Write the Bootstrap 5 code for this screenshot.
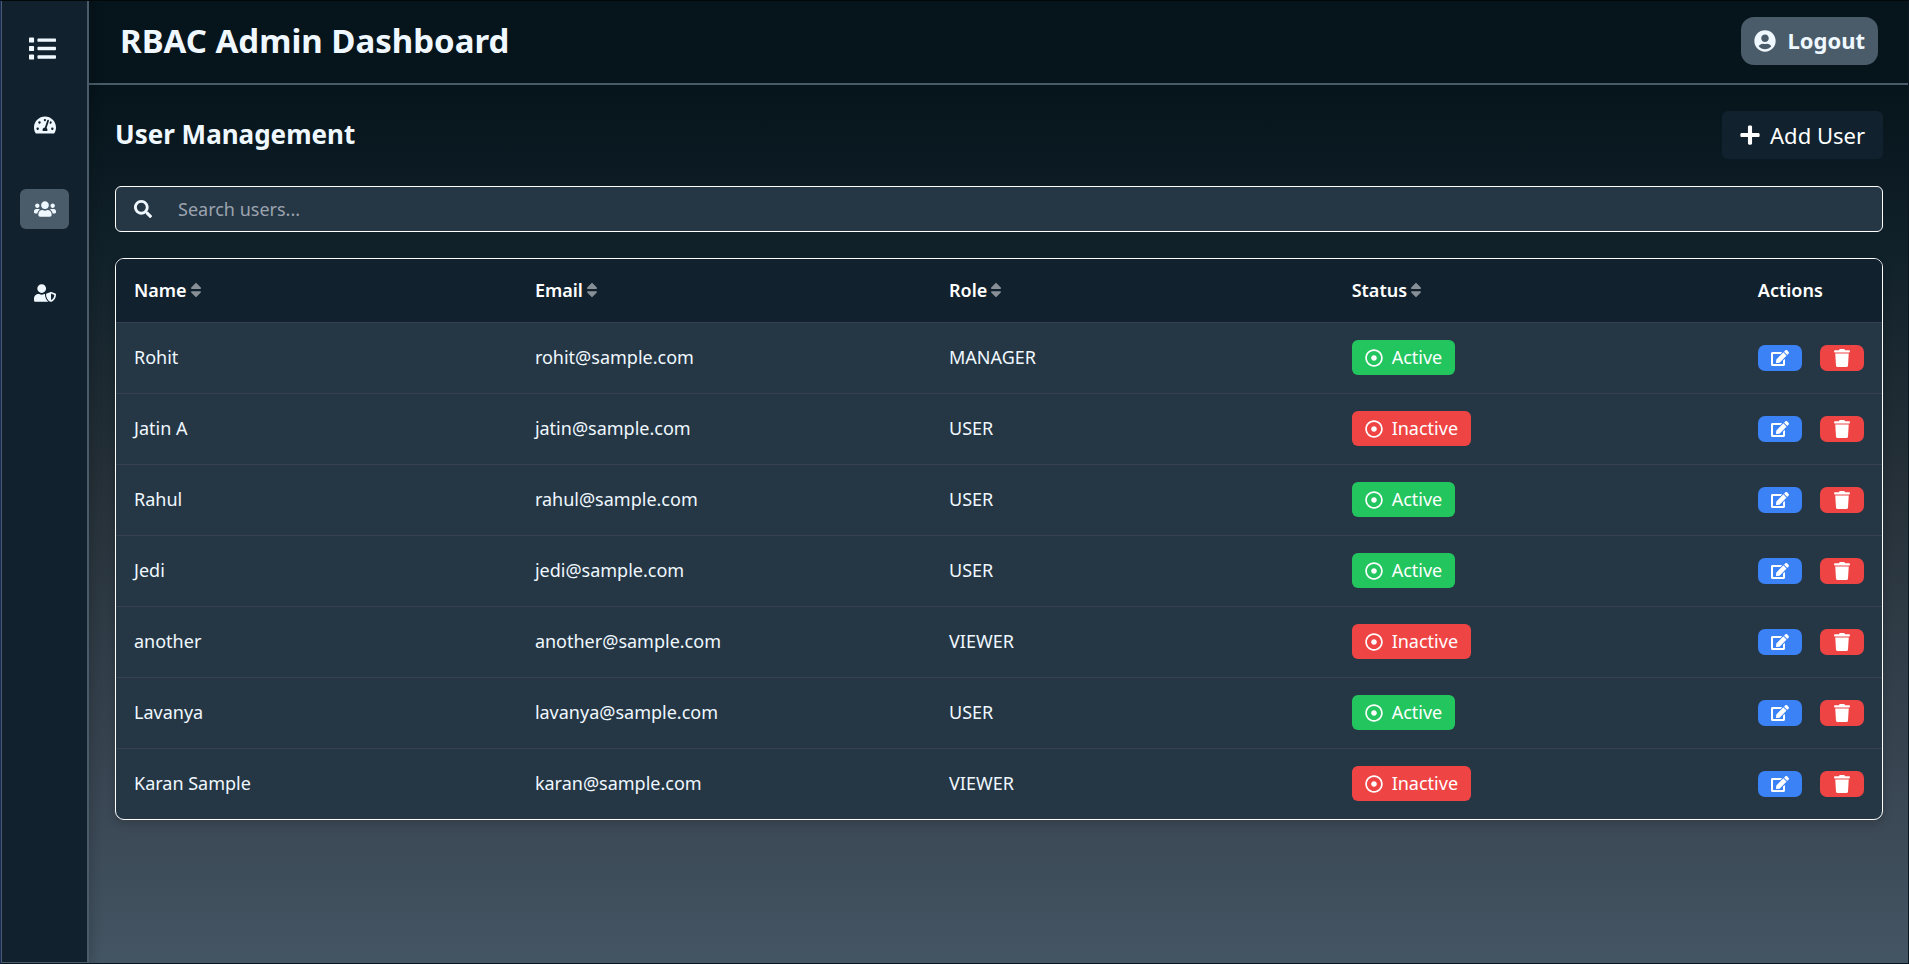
<!DOCTYPE html>
<html lang="en">
<head>
<meta charset="utf-8">
<meta name="viewport" content="width=device-width, initial-scale=1">
<title>RBAC Admin Dashboard</title>
<link href="https://cdn.jsdelivr.net/npm/bootstrap@5.3.0/dist/css/bootstrap.min.css" rel="stylesheet">
<style>
  body {
    font-family: "Noto Sans", sans-serif;
    font-size: 18px;
    color: #f0f8ff;
    background: #06141b;
    border: 1px solid #0a1620;
    border-left-color: #1b2b57;
    border-top-color: #02070a;
  }
  svg { fill: currentColor; display: block; flex: none; }
  .rail {
    width: 88px;
    background: #11212d;
    border: 1px solid #4a5c6a;
    border-width: 0 2px 1px 1px;
    padding-top: 27px;
    box-shadow: 4px 0 10px rgba(0, 0, 0, .15);
    z-index: 1;
  }
  .rail-btn { width: 49px; height: 40px; border-radius: 6px; color: inherit; }
  .rail-btn.active { background: #4a5c6a; }
  .rail-list { gap: 44px; margin-top: 37px; }
  .workspace { background: linear-gradient(to bottom, #06141b 84px, #11212a 250px, #253038 480px, #3a4754 800px, #445563); }
  .topbar { height: 84px; background: #06141b; border-bottom: 2px solid #4a5c6a; padding: 0 30px 2px 31px; }
  .topbar h1 { font-size: 33px; font-weight: 700; }
  .logout { height: 48px; border-radius: 13px; padding: 0 13px 1px; gap: 11px; background: #4a5c6a; color: #f0f8ff; font-size: 22px; font-weight: 700; }
  .logout:hover, .add-user:hover { background: #253745; color: #fff; }
  .content { padding: 26px 25px 26px 26px; }
  .content h2 { font-size: 26px; font-weight: 700; }
  .add-user { height: 48px; border-radius: 6px; padding: 0 18px; gap: 10px; background: #11212d; color: #fff; font-size: 22px; }
  .search-box { height: 46px; margin-top: 27px; padding: 0 18px; gap: 26px; border: 1px solid #fff; border-radius: 6px; background: #253745; }
  .search-box input { font-size: 18px; color: #f0f8ff; outline: 0; }
  .search-box input::placeholder { color: #9ca3af; opacity: 1; }
  .user-card { margin-top: 26px; border: 1px solid #fff; border-radius: 9px; background: #253745; box-shadow: 0 4px 10px rgba(0, 0, 0, .15); }
  .user-table { table-layout: fixed; color: inherit; --bs-table-bg: transparent; --bs-table-color: #f0f8ff; }
  .user-table th { height: 63px; padding: 0 18px; font-weight: 600; color: #fff; background: #11212d; border-color: #374151; vertical-align: middle; }
  .user-table td { height: 71px; padding: 0 18px; border-color: #374151; color: #f0f8ff; }
  .user-table tr:last-child td { border-bottom: 0; }
  .sort-btn { color: inherit; font-size: 18px; font-weight: inherit; gap: 3px; }
  .sort-btn svg { color: #888f96; }
  .state-pill { height: 35px; border-radius: 6px; padding: 0 13px; gap: 9px; color: #fff; }
  .state-on { background: #22c55e; }
  .state-off { background: #ef4444; }
  .act { width: 44px; height: 26px; border-radius: 7px; color: #fff; }
  .act-edit { background: #3b82f6; }
  .act-delete { background: #ef4444; }
  .act-row { gap: 18px; }
</style>
</head>
<body class="d-flex min-vh-100">
<svg width="0" height="0" class="position-absolute" aria-hidden="true">
  <symbol id="i-list" viewBox="0 0 512 512"><path d="M80 368H16a16 16 0 0 0-16 16v64a16 16 0 0 0 16 16h64a16 16 0 0 0 16-16v-64a16 16 0 0 0-16-16zm0-320H16A16 16 0 0 0 0 64v64a16 16 0 0 0 16 16h64a16 16 0 0 0 16-16V64a16 16 0 0 0-16-16zm0 160H16a16 16 0 0 0-16 16v64a16 16 0 0 0 16 16h64a16 16 0 0 0 16-16v-64a16 16 0 0 0-16-16zm416 176H176a16 16 0 0 0-16 16v32a16 16 0 0 0 16 16h320a16 16 0 0 0 16-16v-32a16 16 0 0 0-16-16zm0-320H176a16 16 0 0 0-16 16v32a16 16 0 0 0 16 16h320a16 16 0 0 0 16-16V80a16 16 0 0 0-16-16zm0 160H176a16 16 0 0 0-16 16v32a16 16 0 0 0 16 16h320a16 16 0 0 0 16-16v-32a16 16 0 0 0-16-16z"/></symbol>
  <symbol id="i-gauge" viewBox="0 0 576 512"><path d="M288 32C128.940 32 0 160.940 0 320c0 52.800 14.250 102.260 39.060 144.800 5.610 9.620 16.300 15.200 27.440 15.200h443c11.140 0 21.830-5.580 27.440-15.200C561.750 422.260 576 372.800 576 320c0-159.060-128.940-288-288-288zm0 64c14.710 0 26.580 10.130 30.320 23.650-1.110 2.260-2.640 4.230-3.450 6.670l-9.220 27.670c-5.130 3.490-10.970 6.010-17.640 6.010-17.670 0-32-14.330-32-32S270.330 96 288 96zM96 384c-17.670 0-32-14.330-32-32s14.330-32 32-32 32 14.330 32 32-14.330 32-32 32zm48-160c-17.670 0-32-14.330-32-32s14.330-32 32-32 32 14.330 32 32-14.330 32-32 32zm246.770-72.410l-61.330 184C343.130 347.330 352 364.540 352 384c0 11.720-3.380 22.550-8.880 32H232.880c-5.500-9.450-8.880-20.280-8.880-32 0-33.940 26.500-61.430 59.900-63.590l61.340-184.010c4.170-12.560 17.730-19.450 30.360-15.170 12.570 4.190 19.350 17.790 15.170 30.360zm14.660 57.200l15.520-46.550c3.470-1.290 7.130-2.230 11.050-2.230 17.670 0 32 14.330 32 32s-14.330 32-32 32c-11.380-.01-20.890-6.280-26.570-15.220zM480 384c-17.670 0-32-14.330-32-32s14.330-32 32-32 32 14.330 32 32-14.330 32-32 32z"/></symbol>
  <symbol id="i-users" viewBox="0 0 640 512"><path d="M96 224c35.300 0 64-28.700 64-64s-28.700-64-64-64-64 28.700-64 64 28.700 64 64 64zm448 0c35.300 0 64-28.700 64-64s-28.700-64-64-64-64 28.700-64 64 28.700 64 64 64zm32 32h-64c-17.600 0-33.500 7.100-45.100 18.600 40.300 22.100 68.900 62 75.100 109.400h66c17.700 0 32-14.300 32-32v-32c0-35.300-28.700-64-64-64zm-256 0c61.900 0 112-50.100 112-112S381.900 32 320 32 208 82.100 208 144s50.100 112 112 112zm76.800 32h-8.300c-20.800 10-43.900 16-68.500 16s-47.600-6-68.500-16h-8.300C179.600 288 128 339.600 128 403.200V432c0 26.500 21.500 48 48 48h288c26.500 0 48-21.500 48-48v-28.800c0-63.600-51.600-115.200-115.200-115.200zm-223.700-13.400C161.500 263.100 145.600 256 128 256H64c-35.300 0-64 28.700-64 64v32c0 17.700 14.300 32 32 32h65.900c6.300-47.400 34.900-87.300 75.200-109.400z"/></symbol>
  <symbol id="i-shield" viewBox="0 0 640 512"><path fill-rule="evenodd" d="M622.300 271.100l-115.200-45c-4.100-1.600-12.600-3.700-22.200 0l-115.200 45c-10.700 4.200-17.700 14-17.700 24.900 0 111.600 68.700 188.800 132.900 213.900 9.600 3.700 18 1.600 22.200 0C558.400 489.900 640 420.500 640 296c0-10.900-7-20.700-17.700-24.900zM496 462.400V273.300l95.500 37.300c-5.600 87.100-60.900 135.400-95.500 151.800zM224 256c70.700 0 128-57.300 128-128S294.700 0 224 0 96 57.300 96 128s57.300 128 128 128zm96 40c0-2.500.8-4.800 1.100-7.200-2.500-.1-4.900-.8-7.500-.8h-16.700c-22.200 10.200-46.900 16-72.900 16s-50.600-5.800-72.900-16h-16.700C60.200 288 0 348.200 0 422.400V464c0 26.500 21.500 48 48 48h352c6.800 0 13.300-1.500 19.200-4-54-42.900-99.200-116.700-99.200-212z"/></symbol>
  <symbol id="i-user" viewBox="0 0 496 512"><path d="M248 8C111 8 0 119 0 256s111 248 248 248 248-111 248-248S385 8 248 8zm0 96c48.600 0 88 39.400 88 88s-39.400 88-88 88-88-39.400-88-88 39.400-88 88-88zm0 344c-58.700 0-111.300-26.600-146.500-68.200 18.800-35.400 55.600-59.800 98.500-59.800 2.400 0 4.800.4 7.100 1.100 13 4.200 26.600 6.900 40.900 6.900 14.300 0 28-2.700 40.900-6.900 2.300-.7 4.700-1.100 7.100-1.100 42.900 0 79.700 24.400 98.500 59.800C359.300 421.400 306.700 448 248 448z"/></symbol>
  <symbol id="i-plus" viewBox="0 0 448 512"><path d="M416 208H272V64c0-17.670-14.330-32-32-32h-32c-17.670 0-32 14.330-32 32v144H32c-17.670 0-32 14.330-32 32v32c0 17.670 14.330 32 32 32h144v144c0 17.670 14.330 32 32 32h32c17.670 0 32-14.330 32-32V304h144c17.670 0 32-14.330 32-32v-32c0-17.670-14.330-32-32-32z"/></symbol>
  <symbol id="i-search" viewBox="0 0 512 512"><path d="M505 442.700L405.300 343c-4.500-4.500-10.600-7-17-7H372c27.600-35.300 44-79.700 44-128C416 93.100 322.900 0 208 0S0 93.100 0 208s93.100 208 208 208c48.300 0 92.700-16.400 128-44v16.300c0 6.400 2.500 12.500 7 17l99.700 99.700c9.400 9.400 24.600 9.400 33.900 0l28.300-28.300c9.400-9.400 9.400-24.600.1-34zM208 336c-70.700 0-128-57.200-128-128 0-70.700 57.200-128 128-128 70.700 0 128 57.200 128 128 0 70.700-57.200 128-128 128z"/></symbol>
  <symbol id="i-sort" viewBox="0 0 320 512"><path d="M41 288h238c21.400 0 32.100 25.900 17 41L177 448c-9.400 9.400-24.600 9.400-33.900 0L24 329c-15.100-15.100-4.400-41 17-41zm255-105L177 64c-9.400-9.400-24.600-9.400-33.900 0L24 183c-15.100 15.100-4.400 41 17 41h238c21.400 0 32.100-25.900 17-41z"/></symbol>
  <symbol id="i-dot" viewBox="0 0 512 512"><path d="M256 56c110.532 0 200 89.451 200 200 0 110.532-89.451 200-200 200-110.532 0-200-89.451-200-200 0-110.532 89.451-200 200-200m0-48C119.033 8 8 119.033 8 256s111.033 248 248 248 248-111.033 248-248S392.967 8 256 8zm0 168c-44.183 0-80 35.817-80 80s35.817 80 80 80 80-35.817 80-80-35.817-80-80-80z"/></symbol>
  <symbol id="i-edit" viewBox="0 0 576 512"><path d="M402.600 83.200l90.200 90.200c3.800 3.800 3.800 10 0 13.800L274.400 405.600l-92.800 10.300c-12.400 1.400-22.900-9.100-21.500-21.500l10.300-92.800L388.800 83.200c3.800-3.800 10-3.800 13.800 0zm162-22.900l-48.800-48.800c-15.200-15.200-39.900-15.200-55.200 0l-35.400 35.400c-3.800 3.800-3.800 10 0 13.800l90.200 90.200c3.800 3.800 10 3.800 13.800 0l35.400-35.400c15.200-15.300 15.200-40 0-55.200zM384 346.200V448H64V128h229.800c3.200 0 6.200-1.300 8.500-3.500l40-40c7.600-7.600 2.200-20.500-8.500-20.500H48C21.500 64 0 85.500 0 112v352c0 26.500 21.500 48 48 48h352c26.500 0 48-21.500 48-48V306.200c0-10.700-12.900-16-20.500-8.500l-40 40c-2.200 2.300-3.500 5.300-3.500 8.500z"/></symbol>
  <symbol id="i-trash" viewBox="0 0 448 512"><path d="M432 32H312l-9.400-18.700A24 24 0 0 0 281.100 0H166.800a23.720 23.720 0 0 0-21.400 13.300L136 32H16A16 16 0 0 0 0 48v32a16 16 0 0 0 16 16h416a16 16 0 0 0 16-16V48a16 16 0 0 0-16-16zM53.200 467a48 48 0 0 0 47.900 45h245.800a48 48 0 0 0 47.900-45L416 128H32z"/></symbol>
</svg>

<aside class="rail d-flex flex-column align-items-center flex-shrink-0">
  <button type="button" class="rail-btn btn p-0 border-0 me-1 d-flex align-items-center justify-content-center" aria-label="Toggle menu"><svg width="27" height="27"><use href="#i-list"/></svg></button>
  <nav class="rail-list d-flex flex-column" aria-label="Main">
    <a href="#dashboard" class="rail-btn d-flex align-items-center justify-content-center" aria-label="Dashboard"><svg width="22" height="20"><use href="#i-gauge"/></svg></a>
    <a href="#users" class="rail-btn active d-flex align-items-center justify-content-center" aria-label="Users" aria-current="page"><svg width="22" height="18"><use href="#i-users"/></svg></a>
    <a href="#roles" class="rail-btn d-flex align-items-center justify-content-center" aria-label="Roles"><svg width="22" height="18"><use href="#i-shield"/></svg></a>
  </nav>
</aside>

<div class="workspace flex-grow-1 d-flex flex-column">
  <header class="topbar d-flex align-items-center justify-content-between">
    <h1 class="m-0">RBAC Admin Dashboard</h1>
    <button type="button" class="logout btn border-0 d-flex align-items-center"><svg width="22" height="22"><use href="#i-user"/></svg>Logout</button>
  </header>
  <main class="content">
    <div class="d-flex align-items-center justify-content-between">
      <h2 class="m-0">User Management</h2>
      <button type="button" class="add-user btn border-0 d-flex align-items-center"><svg width="20" height="22"><use href="#i-plus"/></svg>Add User</button>
    </div>
    <label class="search-box d-flex align-items-center">
      <svg width="18" height="18"><use href="#i-search"/></svg>
      <input type="search" class="flex-grow-1 border-0 p-0 bg-transparent" placeholder="Search users..." aria-label="Search users">
    </label>
    <div class="user-card overflow-hidden">
      <table class="user-table table align-middle m-0">
        <colgroup><col style="width:22.7%"><col style="width:23.45%"><col style="width:22.8%"><col style="width:23%"><col style="width:8.05%"></colgroup>
        <thead>
          <tr>
            <th scope="col"><button type="button" class="sort-btn btn border-0 p-0 d-flex align-items-center">Name<svg width="12" height="18"><use href="#i-sort"/></svg></button></th>
            <th scope="col"><button type="button" class="sort-btn btn border-0 p-0 d-flex align-items-center">Email<svg width="12" height="18"><use href="#i-sort"/></svg></button></th>
            <th scope="col"><button type="button" class="sort-btn btn border-0 p-0 d-flex align-items-center">Role<svg width="12" height="18"><use href="#i-sort"/></svg></button></th>
            <th scope="col"><button type="button" class="sort-btn btn border-0 p-0 d-flex align-items-center">Status<svg width="12" height="18"><use href="#i-sort"/></svg></button></th>
            <th scope="col">Actions</th>
          </tr>
        </thead>
        <tbody id="rows"></tbody>
      </table>
    </div>
  </main>
</div>
<script src="https://cdn.jsdelivr.net/npm/bootstrap@5.3.0/dist/js/bootstrap.bundle.min.js"></script>
<script>
  const users = [
    ["Rohit", "rohit@sample.com", "MANAGER", true],
    ["Jatin A", "jatin@sample.com", "USER", false],
    ["Rahul", "rahul@sample.com", "USER", true],
    ["Jedi", "jedi@sample.com", "USER", true],
    ["another", "another@sample.com", "VIEWER", false],
    ["Lavanya", "lavanya@sample.com", "USER", true],
    ["Karan Sample", "karan@sample.com", "VIEWER", false]
  ];
  document.getElementById("rows").innerHTML = users.map(([name, email, role, active]) => `
    <tr>
      <td>${name}</td><td>${email}</td><td>${role}</td>
      <td><span class="state-pill d-inline-flex align-items-center align-middle ${active ? "state-on" : "state-off"}"><svg width="18" height="18"><use href="#i-dot"/></svg>${active ? "Active" : "Inactive"}</span></td>
      <td><div class="act-row d-flex">
        <button type="button" class="act act-edit btn border-0 p-0 d-flex align-items-center justify-content-center" aria-label="Edit ${name}"><svg width="18" height="16"><use href="#i-edit"/></svg></button>
        <button type="button" class="act act-delete btn border-0 p-0 d-flex align-items-center justify-content-center" aria-label="Delete ${name}"><svg width="16" height="18"><use href="#i-trash"/></svg></button>
      </div></td>
    </tr>`).join("");
</script>
</body>
</html>
